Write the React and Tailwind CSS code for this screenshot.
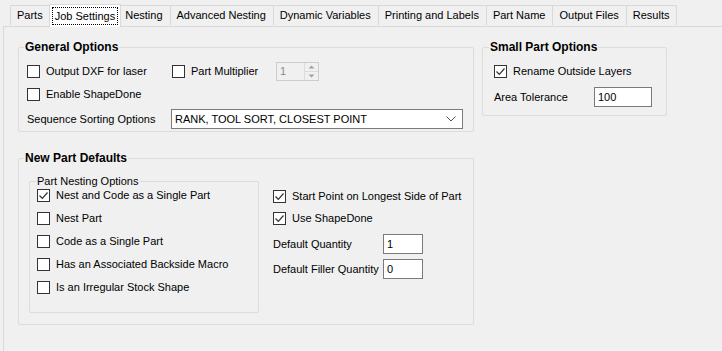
import React from 'react';

const tabs = ['Parts', 'Job Settings', 'Nesting', 'Advanced Nesting', 'Dynamic Variables', 'Printing and Labels', 'Part Name', 'Output Files', 'Results'];

const CheckBox = ({ checked, label, className = '' }) => (
  <label className={`flex items-center h-[13px] ${className}`}>
    <span className="w-[13px] h-[13px] border border-[#333] bg-white flex items-center justify-center shrink-0">
      {checked && (
        <svg width="11" height="11" viewBox="0 0 11 11">
          <path d="M1.5 5.5 L4.3 8.3 L9.5 2.5" fill="none" stroke="#333" strokeWidth="1.2" />
        </svg>
      )}
    </span>
    <span className="ml-[6px] whitespace-nowrap">{label}</span>
  </label>
);

// fieldset keeps no padding so the legend sits at a fixed offset; content padding goes on inner div
const Group = ({ title, bold = true, className = '', legendClass = 'ml-[5px]', bodyClass = '', children }) => (
  <fieldset className={`border border-[#dcdcdc] rounded-[2px] ${className}`}>
    <legend className={`${legendClass} px-[1px] leading-[15px] ${bold ? 'font-bold text-[12px]' : ''}`}>{title}</legend>
    <div className={bodyClass}>{children}</div>
  </fieldset>
);

const App = () => {
  return (
    <div className="w-[722px] h-[351px] bg-[#f0f0f0] overflow-hidden text-[11px] text-black" style={{ fontFamily: '"Liberation Sans", Arial, sans-serif' }}>
      {/* Tab strip */}
      <div className="h-[26px] flex items-end pl-[10px]">
        {tabs.map((t) => {
          const active = t === 'Job Settings';
          return active ? (
            <div key={t} className="h-[23px] -mx-[2px] px-[2px] pt-[2px] bg-white border border-b-0 border-[#d9d9d9] relative z-10 mb-[-1px]">
              <div className="h-[18px] px-[2px] border border-dotted border-black flex items-center">{t}</div>
            </div>
          ) : (
            <div key={t} className="h-[20px] pl-[6px] pr-[7px] flex items-center border border-b-0 border-l-0 first:border-l border-[#d9d9d9] mb-[1px]">
              {t}
            </div>
          );
        })}
      </div>

      {/* Tab page */}
      <div className="ml-[3px] h-full border-l border-t border-[#d9d9d9] flex pl-[14px] pt-[13px]">
        <div className="w-[456px] flex flex-col">
          <Group title="General Options" className="h-[92px]" bodyClass="px-[8px]">
            <div className="flex items-center mt-[7px] h-[19px]">
              <CheckBox label="Output DXF for laser" className="w-[145px]" />
              <CheckBox label="Part Multiplier" className="w-[104px]" />
              <div className="w-[43px] h-[19px] border border-[#ccc] bg-[#f0f0f0] flex items-center text-[#8a8a8a] justify-between">
                <span className="pl-[3px]">1</span>
                <div className="w-[14px] h-full flex flex-col border-l border-[#dcdcdc]">
                  <div className="flex-1 flex items-center justify-center border-b border-[#dcdcdc]">
                    <svg width="7" height="4" viewBox="0 0 7 4"><path d="M0.5 3.5 L3.5 0.5 L6.5 3.5Z" fill="#a0a0a0" /></svg>
                  </div>
                  <div className="flex-1 flex items-center justify-center">
                    <svg width="7" height="4" viewBox="0 0 7 4"><path d="M0.5 0.5 L3.5 3.5 L6.5 0.5Z" fill="#a0a0a0" /></svg>
                  </div>
                </div>
              </div>
            </div>
            <CheckBox label="Enable ShapeDone" className="mt-[7px]" />
            <div className="flex items-center mt-[8px]">
              <span className="w-[144px]">Sequence Sorting Options</span>
              <div className="w-[292px] h-[20px] bg-white border border-[#7a7a7a] flex items-center justify-between pl-[3px] pr-[6px]">
                <span>RANK, TOOL SORT, CLOSEST POINT</span>
                <svg width="10" height="6" viewBox="0 0 10 6"><path d="M0.5 0.5 L5 5 L9.5 0.5" fill="none" stroke="#555" strokeWidth="1" /></svg>
              </div>
            </div>
          </Group>

          <Group title="New Part Defaults" className="h-[174px] mt-[19px]" bodyClass="pl-[10px]">
            <div className="flex mt-[8px]">
              <Group title="Part Nesting Options" bold={false} legendClass="ml-[6px]" className="w-[230px] h-[139px]" bodyClass="pl-[7px]">
                <div className="flex flex-col gap-[10px]">
                  <CheckBox checked label="Nest and Code as a Single Part" />
                  <CheckBox label="Nest Part" />
                  <CheckBox label="Code as a Single Part" />
                  <CheckBox label="Has an Associated Backside Macro" />
                  <CheckBox label="Is an Irregular Stock Shape" />
                </div>
              </Group>
              <div className="ml-[14px] flex flex-col pt-[16px]">
                <CheckBox checked label="Start Point on Longest Side of Part" />
                <CheckBox checked label="Use ShapeDone" className="mt-[9px]" />
                <div className="flex items-center mt-[9px]">
                  <span className="w-[110px]">Default Quantity</span>
                  <div className="w-[40px] h-[20px] bg-white border border-[#7a7a7a] pl-[3px] flex items-center">1</div>
                </div>
                <div className="flex items-center mt-[5px]">
                  <span className="w-[110px]">Default Filler Quantity</span>
                  <div className="w-[40px] h-[20px] bg-white border border-[#7a7a7a] pl-[3px] flex items-center">0</div>
                </div>
              </div>
            </div>
          </Group>
        </div>

        <div className="ml-[8px]">
          <Group title="Small Part Options" legendClass="ml-[6px]" className="w-[185px] h-[76px]" bodyClass="pl-[11px]">
            <CheckBox checked label="Rename Outside Layers" className="mt-[10px]" />
            <div className="flex items-center mt-[9px]">
              <span className="w-[100px]">Area Tolerance</span>
              <div className="w-[58px] h-[20px] bg-white border border-[#7a7a7a] pl-[3px] flex items-center">100</div>
            </div>
          </Group>
        </div>
      </div>
    </div>
  );
};

export default App;
